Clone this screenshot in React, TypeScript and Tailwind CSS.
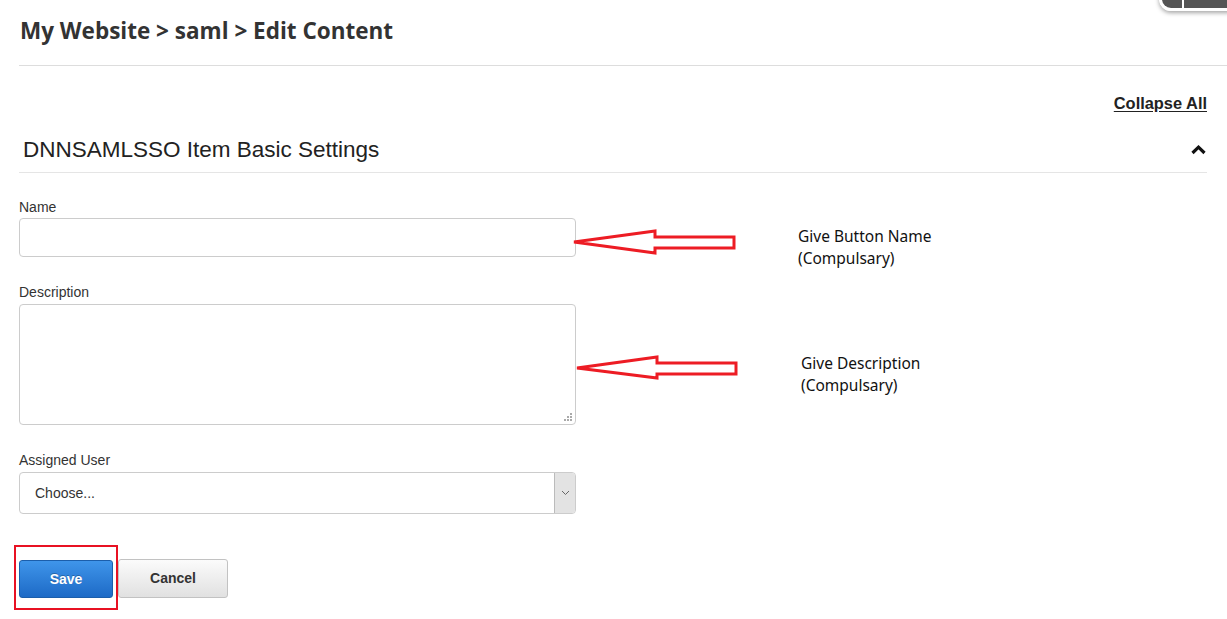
import React from "react";

function Annotation({ left, top, title }: { left: number; top: number; title: string }) {
  return (
    <div
      className="absolute font-['Noto_Sans',sans-serif] text-[15.5px] leading-[22px] text-[#111]"
      style={{ left, top }}
    >
      <p>{title}</p>
      <p>(Compulsary)</p>
    </div>
  );
}

function Arrows() {
  return (
    <svg className="pointer-events-none absolute left-0 top-0" width="1227" height="619" fill="none">
      <polygon
        points="574,242 655,231 655,237 734,237 734,248 655,248 655,253"
        stroke="#ed1c24"
        strokeWidth="3"
        strokeLinejoin="miter"
      />
      <polygon
        points="577,368 657,357 657,363 736,363 736,374 657,374 657,378"
        stroke="#ed1c24"
        strokeWidth="3"
        strokeLinejoin="miter"
      />
    </svg>
  );
}

export default function App() {
  return (
    <div className="relative h-[619px] w-full overflow-hidden bg-white font-['Liberation_Sans',Arial,sans-serif] text-[#333]">
      {/* control bar peeking in at the top right */}
      <div className="absolute -top-[22px] right-[-12px] flex h-[33px] w-[80px] overflow-hidden rounded-xl border-[3px] border-white shadow-[0_2px_4px_rgba(0,0,0,0.35)]">
        <div className="w-[20px] bg-[#555]" />
        <div className="ml-[2px] flex-1 bg-[#555]" />
      </div>

      <div className="pl-[19px]">
        <h1 className="pl-px pt-[15px] font-['Open_Sans',sans-serif] text-[22.5px] font-bold leading-[32px] text-[#333]">
          My Website &gt; saml &gt; Edit Content
        </h1>
        <div className="mt-[18px] h-px bg-[#ddd]" />
      </div>

      <div className="pl-[19px] pr-[20px]">
        <div className="mt-[28px] flex justify-end">
          <a className="text-[16.4px] font-bold leading-[18px] text-[#222] underline underline-offset-2">Collapse All</a>
        </div>

        <div className="mt-[25px] flex items-center justify-between border-b border-[#e5e5e5] pb-[9px]">
          <h2 className="pl-[4px] text-[22.5px] leading-[26px] text-[#222]">DNNSAMLSSO Item Basic Settings</h2>
          <svg width="15" height="10" viewBox="0 0 15 10" className="mr-px">
            <polyline points="1.5,8 7.5,2.2 13.5,8" fill="none" stroke="#111" strokeWidth="3.2" />
          </svg>
        </div>

        <div className="w-[557px]">
          <label className="mt-[24px] block text-[14px] leading-[20px]">Name</label>
          <input className="mt-px block h-[39px] w-full rounded-[4px] border border-[#ccc] bg-white px-3 outline-none" />

          <label className="mt-[25px] block text-[14px] leading-[20px]">Description</label>
          <div className="relative mt-[2px] h-[121px] w-full rounded-[4px] border border-[#ccc]">
            <svg className="absolute bottom-[2px] right-[2px]" width="10" height="10" viewBox="0 0 10 10">
              <rect x="7" y="1" width="2" height="2" fill="#aaa" />
              <rect x="4" y="4" width="2" height="2" fill="#aaa" />
              <rect x="7" y="4" width="2" height="2" fill="#aaa" />
              <rect x="1" y="7" width="2" height="2" fill="#aaa" />
              <rect x="4" y="7" width="2" height="2" fill="#aaa" />
              <rect x="7" y="7" width="2" height="2" fill="#aaa" />
            </svg>
          </div>

          <label className="mt-[25px] block text-[14px] leading-[20px]">Assigned User</label>
          <div className="mt-[2px] flex h-[42px] w-full overflow-hidden rounded-[4px] border border-[#ccc]">
            <span className="flex flex-1 items-center pl-[15px] text-[14px] text-[#333]">Choose...</span>
            <span className="flex w-[21px] items-center justify-center border-l border-[#bbb] bg-[#e3e3e3]">
              <svg width="9" height="6" viewBox="0 0 9 6">
                <polyline points="1,1 4.5,4.5 8,1" fill="none" stroke="#666" strokeWidth="1" />
              </svg>
            </span>
          </div>
        </div>

        <div className="mt-[45px] flex items-start gap-[5px]">
          <div className="relative mt-px">
            <button className="h-[38px] w-[94px] rounded-[3px] border border-[#1b5eab] bg-linear-to-b from-[#3f95ea] to-[#1d6ac6] text-[14px] font-bold text-white [text-shadow:0_-1px_0_rgba(0,0,0,0.25)]">
              Save
            </button>
            <div className="pointer-events-none absolute -left-[5px] -top-[15px] h-[65px] w-[104px] border-[2.5px] border-[#e81123]" />
          </div>
          <button className="h-[39px] w-[110px] rounded-[3px] border border-[#c2c2c2] bg-linear-to-b from-[#fbfbfb] to-[#e1e1e1] text-[14px] font-bold text-[#333]">
            Cancel
          </button>
        </div>
      </div>

      <Arrows />
      <Annotation left={798} top={225} title="Give Button Name" />
      <Annotation left={801} top={352} title="Give Description" />
    </div>
  );
}
